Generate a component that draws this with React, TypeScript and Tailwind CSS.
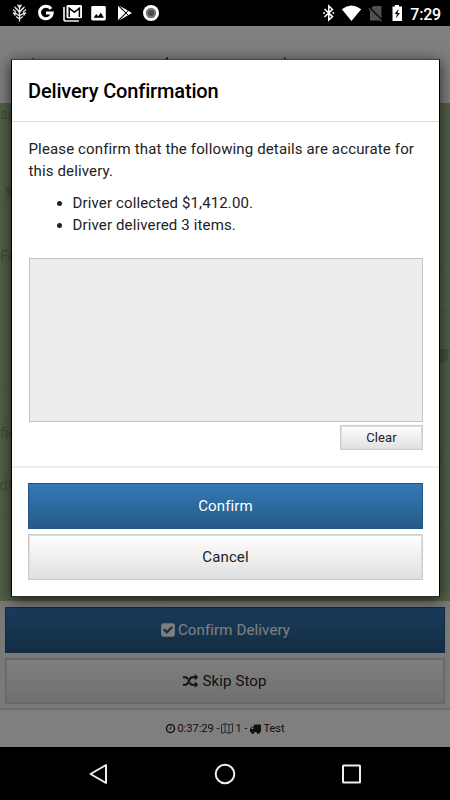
import type { ReactNode } from "react";
import clsx from "clsx";

function FaGlyph({ d, className }: { d: string; className?: string }) {
  return (
    <svg viewBox="0 0 1792 1792" fill="currentColor" className={className}>
      <path d={d} />
    </svg>
  );
}

const checkSquare =
  "M813 1299l614-614q19-19 19-45t-19-45l-102-102q-19-19-45-19t-45 19l-467 467-211-211q-19-19-45-19t-45 19l-102 102q-19 19-19 45t19 45l358 358q19 19 45 19t45-19zm851-883v960q0 119-84.5 203.5t-203.5 84.5h-960q-119 0-203.5-84.5t-84.5-203.5v-960q0-119 84.5-203.5t203.5-84.5h960q119 0 203.5 84.5t84.5 203.5z";
const random =
  "M666 481q-60 92-137 273-22-45-37-72.5t-40.5-63.5-51-56.5-63-35-81.5-14.5h-224q-14 0-23-9t-9-23v-192q0-14 9-23t23-9h224q250 0 410 225zm1126 799q0 14-9 23l-320 320q-9 9-23 9-13 0-22.5-9.5t-9.5-22.5v-192q-32 0-85 .5t-81 1-73-1-71-5-64-10.5-63-18.5-58-28.5-59-40-55-53.5-56-69.5q59-93 136-273 22 45 37 72.5t40.5 63.5 51 56.5 63 35 81.5 14.5h256v-192q0-14 9-23t23-9q12 0 24 10l319 319q9 9 9 23zm0-896q0 14-9 23l-320 320q-9 9-23 9-13 0-22.5-9.5t-9.5-22.5v-192h-256q-48 0-87 15t-69 45-51 61.5-45 77.5q-32 62-78 171-29 66-49.5 111t-54 105-64 100-74 83-90 68.5-106.5 42-128 16.5h-224q-14 0-23-9t-9-23v-192q0-14 9-23t23-9h224q48 0 87-15t69-45 51-61.5 45-77.5q32-62 78-171 29-66 49.5-111t54-105 64-100 74-83 90-68.5 106.5-42 128-16.5h256v-192q0-14 9-23t23-9q12 0 24 10l319 319q9 9 9 23z";
const clock =
  "M1024 544v448q0 14-9 23t-23 9h-320q-14 0-23-9t-9-23v-64q0-14 9-23t23-9h224v-352q0-14 9-23t23-9h64q14 0 23 9t9 23zm416 352q0-148-73-273t-198-198-273-73-273 73-198 198-73 273 73 273 198 198 273 73 273-73 198-198 73-273zm224 0q0 209-103 385.5t-279.5 279.5-385.5 103-385.5-103-279.5-279.5-103-385.5 103-385.5 279.5-279.5 385.5-103 385.5 103 279.5 279.5 103 385.5z";

function StatusBar() {
  return (
    <div className="flex h-[26px] shrink-0 items-center justify-between bg-black pr-[9px] pl-[12px] text-white">
      <svg width="150" height="18" viewBox="0 0 150 18" fill="none" className="shrink-0">
        {/* tree */}
        <g stroke="#e4e4e4" strokeWidth="1.3">
          <path d="M7.5 17.5V1M7.5 15L4 12.5M7.5 15L11 12.5M7.5 12L2.5 8.5M7.5 12L12.5 8.5M7.5 8.5L4 4M7.5 8.5L11 4M7.5 4L5.5 .5M7.5 4L9.5 .5M3.5 11.5L1.2 8.5M11.5 11.5L13.8 8.5M4 8L1 5.5M11 8L14 5.5M4.5 5.5L2.5 2.5M10.5 5.5L12.5 2.5" />
        </g>
        {/* google */}
        <path d="M39 4.8A6.3 6.3 0 1 0 40.2 9H34" stroke="#fff" strokeWidth="3" />
        {/* mail stack */}
        <path d="M52 3V15.2Q52 17 53.8 17H67" stroke="#eee" strokeWidth="1.7" />
        <rect x="54.5" y="1" width="15.5" height="13.3" rx="1.4" fill="#fff" />
        <path d="M57.2 13V4.2L62.3 8.2L67.4 4.2V13" stroke="#000" strokeWidth="1.5" />
        {/* image */}
        <rect x="79.2" y="2" width="14.6" height="14.5" rx="1.4" fill="#fff" />
        <path d="M81.5 13.8L84.3 10L86.2 12.2L88.8 8.8L92 13.8Z" fill="#000" />
        {/* play store */}
        <path d="M106 1.5L113.7 9L106 16.5Z" fill="#fff" />
        <path d="M107.5 1.8L120 9L107.5 16.2L114.6 9Z" fill="#fff" />
        <path d="M106.5 1.8L116.5 11.6M106.5 16.2L116.5 6.4" stroke="#000" strokeWidth="1" />
        {/* record */}
        <circle cx="139" cy="9" r="8" fill="#fff" />
        <circle cx="139" cy="9" r="5.2" fill="#777" />
        <circle cx="139" cy="9" r="3" fill="#4a4a4a" />
      </svg>
      <div className="flex items-center">
        <svg width="80" height="18" viewBox="0 0 80 18" fill="none">
          {/* bluetooth */}
          <path d="M1.5 5L9.5 12.6L5.8 16V2L9.5 5.4L1.5 13" stroke="#fff" strokeWidth="1.5" />
          <circle cx="1" cy="9" r=".9" fill="#fff" />
          <circle cx="10.4" cy="9" r=".9" fill="#fff" />
          <path d="M18.8 5.2Q28.5-2 38.2 5.2L28.5 17Z" fill="#fff" />
          {/* no sim */}
          <path d="M50.5 2H58.5V16.5H47V5.5Z" fill="#505050" />
          <path d="M45.5 3L59.5 17" stroke="#000" strokeWidth="2.2" />
          <path d="M45.7 4.5L58.7 17.3" stroke="#505050" strokeWidth="1.2" />
          {/* battery */}
          <path d="M69.5 2.4H72V1H76V2.4H79V17H69.5Z" fill="#fff" />
          <path d="M75.8 4.7L71.5 10H74L72.7 14.6L77 9H74.6Z" fill="#111" />
        </svg>
        <span className="mt-[3px] ml-[7px] text-base leading-none font-medium tracking-[-0.2px]">7:29</span>
      </div>
    </div>
  );
}

type ButtonProps = { children: ReactNode; primary?: boolean; className?: string };

function Button({ children, primary, className }: ButtonProps) {
  return (
    <button
      className={clsx(
        "flex items-center justify-center border tracking-[0.14px]",
        primary
          ? "border-[#245580] bg-linear-to-b from-[#337ab7] to-[#265a88] text-white"
          : "border-[#ccc] bg-linear-to-b from-white to-[#e0e0e0] text-[#222] shadow-[inset_0_0_0_1px_#ddd]",
        className,
      )}
    >
      {children}
    </button>
  );
}

function MapView() {
  return (
    <div className="relative h-[498px] shrink-0 overflow-hidden bg-[#a8c292] text-[15px] text-[#83996f]">
      <svg className="absolute inset-0" width="450" height="498" fill="none" stroke="#9db587">
        <path d="M-5 105Q6 100 14 107M-5 290L14 284M-5 325L14 316M-5 420Q6 410 14 418M438 170L452 148M438 360L452 328M438 427L452 405M438 208H452M438 247H452" />
        <path d="M5 84H14V96Q7 94 5 84ZM440 246H449Q449 260 440 260Z" fill="#8ba77a" stroke="none" />
        <path d="M154 494V498M163 494V498M171 496H176M180 496H187M193 496H197M202 496H209" stroke="#8ba077" />
      </svg>
      <span className="absolute top-0 left-0">sid</span>
      <span className="absolute top-[142px] left-0">Fo</span>
      <span className="absolute top-[319px] left-0">fie</span>
      <span className="absolute top-[371px] left-[-1px]">df</span>
    </div>
  );
}

function ConfirmDialog() {
  return (
    <div className="absolute top-[59px] left-[11px] h-[538px] w-[429px] border border-x-black border-t-[#444] border-b-[#333] bg-white shadow-[0_3px_14px_rgba(0,0,0,0.7)]">
      <div className="flex h-[62px] items-center border-b border-[#ddd] px-4">
        <h2 className="text-xl font-medium tracking-[-0.15px] text-black">Delivery Confirmation</h2>
      </div>
      <div className="h-[344px] pr-4 pl-[16.5px] pt-4 text-[15px] leading-[22px] tracking-[0.14px] text-[#222]">
        <p>Please confirm that the following details are accurate for this delivery.</p>
        <ul className="mt-[10px] list-disc pl-11">
          <li>Driver collected $1,412.00.</li>
          <li>Driver delivered 3 items.</li>
        </ul>
        <div className="mt-[22px] h-[164px] border border-[#c4c4c4] bg-[#ededed]" />
        <div className="mt-[3px] flex justify-end">
          <Button className="h-[25px] w-[83px] text-[13px]">Clear</Button>
        </div>
      </div>
      <div className="flex flex-col gap-[5px] border-t-2 border-[#ececec] px-4 pt-[15px] text-[15px]">
        <Button primary className="h-[46px]">Confirm</Button>
        <Button className="h-[46px]">Cancel</Button>
      </div>
    </div>
  );
}

export default function App() {
  return (
    <div className="relative flex h-[800px] w-[450px] flex-col overflow-hidden bg-black font-[Roboto,sans-serif]">
      <StatusBar />
      <div className="relative flex h-[721px] shrink-0 flex-col bg-white">
        <div className="h-[77px] shrink-0">
          <svg width="450" height="34" viewBox="0 0 450 34" fill="#111">
            <path d="M32 32.5H34V34H32ZM165 33L168 31V34H165ZM284 31L287 34H284Z" />
          </svg>
        </div>
        <MapView />
        <div className="flex h-[109px] shrink-0 flex-col gap-[5px] border-b-2 border-[#ddd] bg-[#f3f3f3] px-[5px] pt-[6px] text-[15px]">
          <Button primary className="h-[46px]">
            <FaGlyph d={checkSquare} className="mr-[2px] size-4" />
            Confirm Delivery
          </Button>
          <Button className="h-[46px]">
            <FaGlyph d={random} className="mr-1 size-[15px]" />
            Skip Stop
          </Button>
        </div>
        <div className="flex h-[37px] items-center justify-center pt-[2px] text-[11px] text-[#222]">
          <FaGlyph d={clock} className="mr-[1px] size-[11px] -translate-y-px" />
          0:37:29 -
          <svg width="12" height="11" viewBox="0 0 12 11" fill="none" stroke="#333" className="mx-[2px] -translate-y-px">
            <path d="M.5 2L4 .7L8 2L11.5 .7V9L8 10.3L4 9L.5 10.3ZM4 .7V9M8 2V10.3" strokeWidth=".8" />
          </svg>
          1 -
          <svg width="11" height="10" viewBox="0 0 11 10" fill="#222" className="mr-[2px] ml-[3px] -translate-y-px">
            <path fillRule="evenodd" d="M4 .5H11V8H0V5L2 2.5H4ZM1.2 5H3.3V3.3H2.3Z" />
            <circle cx="2.8" cy="8.3" r="1.6" />
            <circle cx="8.2" cy="8.3" r="1.6" />
          </svg>
          Test
        </div>
      </div>
      <div className="absolute inset-x-0 top-[26px] h-[721px] bg-black/50" />
      <ConfirmDialog />
      <div className="flex h-[53px] items-center justify-center">
        <svg width="450" height="53" viewBox="0 0 450 53" fill="none" stroke="#eee" strokeWidth="2">
          <path d="M106 18V36L90.5 27Z" strokeLinejoin="round" />
          <circle cx="225" cy="27" r="9.3" />
          <rect x="343" y="18.5" width="17" height="17" rx=".5" />
        </svg>
      </div>
    </div>
  );
}
